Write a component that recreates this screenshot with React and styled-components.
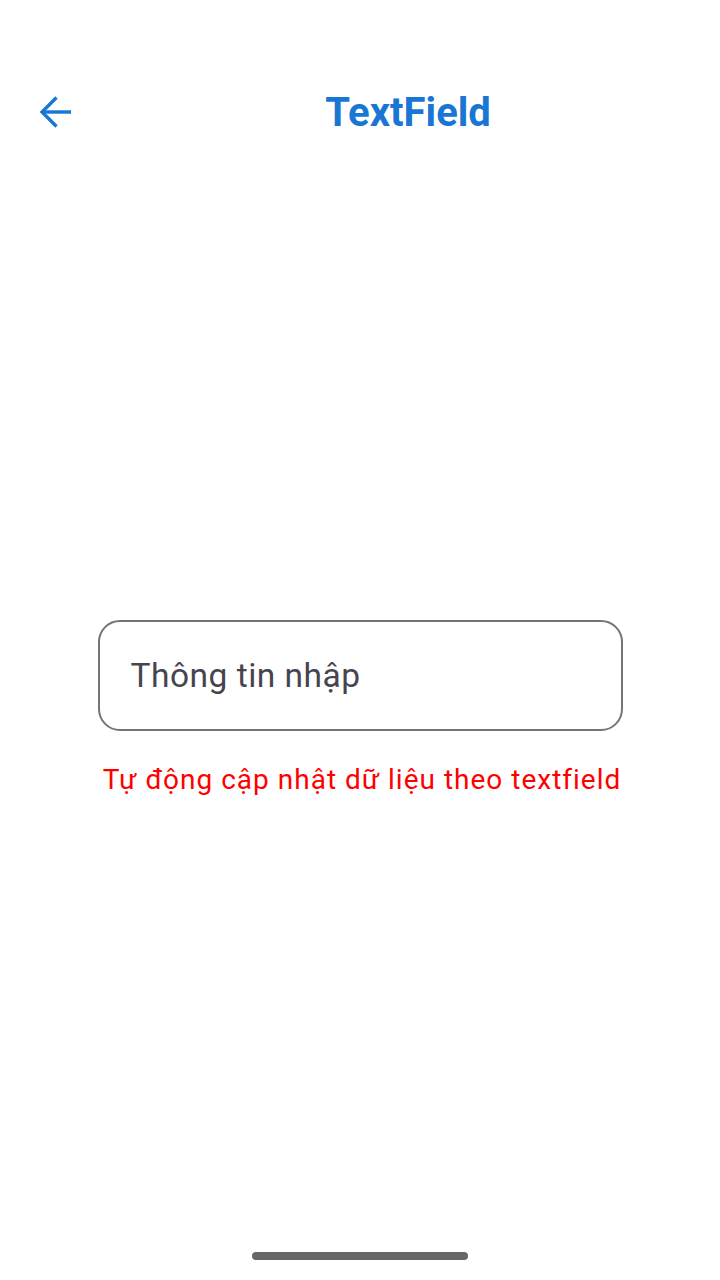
import React from "react";
import styled, { createGlobalStyle } from "styled-components";

const Global = createGlobalStyle`
  html, body { margin: 0; padding: 0; background: #ffffff; }
  body { font-family: Roboto, "Noto Sans", sans-serif; }
`;

const Page = styled.div`
  width: 720px;
  height: 1280px;
  display: flex;
  flex-direction: column;
  background: #ffffff;
  overflow: hidden;
`;

const AppBar = styled.header`
  display: grid;
  grid-template-columns: 96px 1fr;
  align-items: center;
  height: 62px;
  margin-top: 81px;
`;

const BackButton = styled.button`
  width: 36px;
  height: 36px;
  margin-left: 38px;
  padding: 0;
  border: none;
  background: transparent;
  display: flex;
  align-items: center;
  justify-content: center;
  color: #1976d2;
`;

const Title = styled.h1`
  margin: 0;
  text-align: center;
  font-family: Roboto, sans-serif;
  font-weight: 700;
  font-size: 40px;
  line-height: 62px;
  color: #1976d2;
  transform: translateY(1px);
`;

const Main = styled.main`
  flex: 1;
  display: flex;
  flex-direction: column;
  align-items: center;
  padding-top: 477px;
`;

const Field = styled.div`
  box-sizing: border-box;
  width: 525px;
  height: 111px;
  border: 2px solid #74737b;
  border-radius: 22px;
  display: flex;
  align-items: center;
  padding-left: 31px;
`;

const FieldText = styled.span`
  font-family: Roboto, sans-serif;
  font-size: 33.5px;
  color: #46454f;
  letter-spacing: 0.5px;
`;

const Helper = styled.p`
  margin: 32px 0 0 4px;
  font-family: Roboto, sans-serif;
  font-size: 28px;
  line-height: 34px;
  color: #ff0000;
  letter-spacing: 1px;
  text-align: center;
`;

const HomeBar = styled.div`
  align-self: center;
  width: 216px;
  height: 8px;
  border-radius: 4px;
  background: #666666;
  margin-bottom: 20px;
`;

export default function App() {
  return (
    <Page>
      <Global />
      <AppBar>
        <BackButton aria-label="Back">
          <svg width="36" height="36" viewBox="0 0 36 36" fill="none">
            <path d="M33 18H5" stroke="currentColor" strokeWidth="3.4" />
            <path d="M18.5 3.5L4 18l14.5 14.5" stroke="currentColor" strokeWidth="3.4" />
          </svg>
        </BackButton>
        <Title>TextField</Title>
      </AppBar>
      <Main>
        <Field>
          <FieldText>Thông tin nhập</FieldText>
        </Field>
        <Helper>Tự động cập nhật dữ liệu theo textfield</Helper>
      </Main>
      <HomeBar />
    </Page>
  );
}
